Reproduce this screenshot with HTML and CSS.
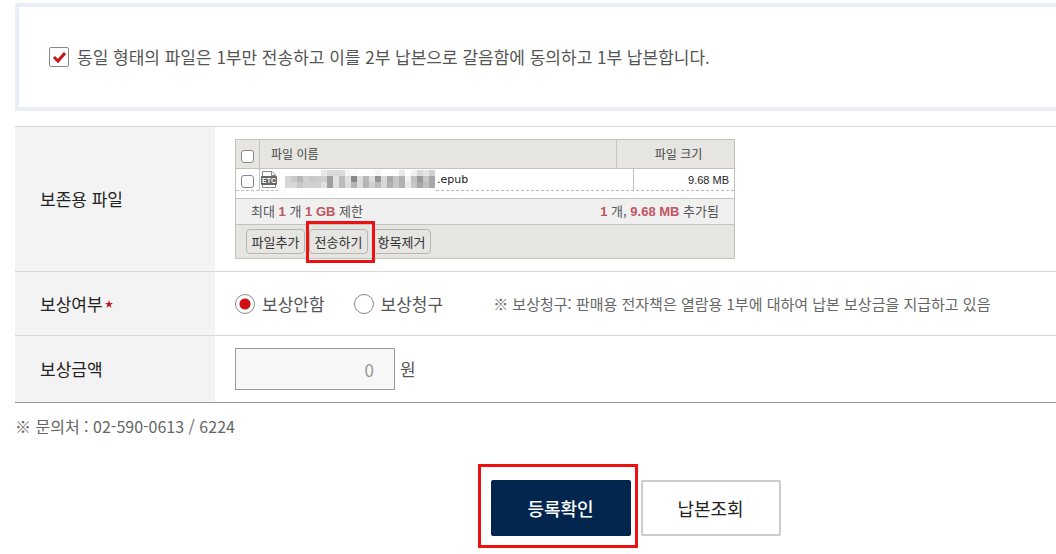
FILE: index.html
```
<!DOCTYPE html>
<html lang="ko">
<head>
    <meta charset="UTF-8">
    <meta name="viewport" content="width=device-width, initial-scale=1.0">
    <title>전자책 납본</title>
    <link rel="stylesheet" href="styles.css">
</head>
<body>
    <form class="deposit-form" id="depositForm">
        <div class="agree-box">
            <input type="checkbox" class="agree-check" id="agree" name="agree" checked>
            <label for="agree">동일 형태의 파일은 1부만 전송하고 이를 2부 납본으로 갈음함에 동의하고 1부 납본합니다.</label>
        </div>

        <div class="form-table">
            <div class="form-row">
                <div class="form-label">보존용 파일</div>
                <div class="form-field">
                    <div class="uploader">
                        <div class="file-head">
                            <div class="col-check"><input type="checkbox" class="file-check" aria-label="전체 선택"></div>
                            <div class="col-name">파일 이름</div>
                            <div class="col-size">파일 크기</div>
                        </div>
                        <div class="file-row">
                            <div class="col-check"><input type="checkbox" class="file-check" aria-label="파일 선택"></div>
                            <div class="col-name">
                                <svg class="file-icon" width="16" height="17" viewBox="0 0 16 17">
                                    <path d="M1.500 6V.5H11L14.500 4V6M10.500 .5V4.500H14.500M1.500 13V16.500H14.500V13" fill="#fff" stroke="#888"/>
                                    <rect y="5" width="16" height="9" rx="1" fill="#666"/>
                                    <text x="8" y="12" text-anchor="middle" class="file-type">ETC</text>
                                </svg>
                                <svg class="mosaic" id="mosaic" width="158" height="23" viewBox="0 0 158 23"></svg>
                                <span class="file-ext">.epub</span>
                            </div>
                            <div class="col-size">9.68 MB</div>
                        </div>
                        <div class="file-status">
                            <span>최대 <b>1</b> 개 <b>1 GB</b> 제한</span>
                            <span><b>1</b> 개, <b>9.68 MB</b> 추가됨</span>
                        </div>
                        <div class="file-buttons">
                            <button type="button">파일추가</button>
                            <button type="button" class="marked">전송하기</button>
                            <button type="button">항목제거</button>
                        </div>
                    </div>
                </div>
            </div>

            <div class="form-row">
                <div class="form-label">보상여부<svg class="star" width="8" height="8" viewBox="0 0 8 8"><path d="M4 0L5 2.900H8L5.600 4.700L6.500 7.700L4 5.900L1.500 7.700L2.400 4.700L0 2.900H3Z" fill="#c8141a"/></svg></div>
                <div class="form-field">
                    <input type="radio" id="rewardNo" name="reward" checked>
                    <label for="rewardNo">보상안함</label>
                    <input type="radio" id="rewardYes" name="reward">
                    <label for="rewardYes">보상청구</label>
                    <p class="note">※ 보상청구: 판매용 전자책은 열람용 1부에 대하여 납본 보상금을 지급하고 있음</p>
                </div>
            </div>

            <div class="form-row">
                <label class="form-label" for="amount">보상금액</label>
                <div class="form-field">
                    <input type="text" class="amount" id="amount" name="amount" value="0" readonly>
                    <span class="unit">원</span>
                </div>
            </div>
        </div>

        <p class="contact">※ 문의처 : 02-590-0613 / 6224</p>

        <div class="actions">
            <button type="submit" class="btn btn-primary marked">등록확인</button>
            <button type="button" class="btn">납본조회</button>
        </div>
    </form>

    <script>
        // hidden file name: one grey level per 6px tile, row by row
        const tiles = [
            'ff ff ff ff ff ff e8 da d8 dc f4 f8 ff ff ff f6 ff ff ff e8 ff f0 d8 e4 d0',
            'd4 c8 b8 d0 c8 cc d0 a0 e4 bc e0 88 dc b8 dc 94 d8 a8 c8 b0 f0 c0 99 c8 a8',
            'd8 d8 c8 d0 d0 d0 e0 a0 e0 bc dc b4 dc b4 d0 bc d8 b0 c8 b0 e8 c8 a8 c0 a8'
        ];
        let rects = '';
        tiles.forEach((row, y) => {
            row.split(' ').forEach((c, x) => {
                rects += `<rect x="${7 + x * 6}" y="${1 + y * 6}" width="6" height="6" fill="#${c}${c}${c}"/>`;
            });
        });
        document.getElementById('mosaic').innerHTML = rects;

        document.getElementById('depositForm').addEventListener('submit', function(event) {
            event.preventDefault();
        });
    </script>
</body>
</html>
```
FILE: styles.css
```
* {
    box-sizing: border-box;
}

body {
    margin: 0;
    padding: 3px 0 18px 15px;
    background-color: #fff;
    color: #555;
    font-family: "Noto Sans CJK KR", sans-serif;
    font-size: 17px;
    line-height: 24px;
}

input,
button {
    margin: 0;
    font-family: inherit;
}

input[type="checkbox"],
input[type="radio"] {
    appearance: none;
    flex: none;
    border: 1px solid #888;
    background-color: #fff;
}

.agree-box {
    display: flex;
    align-items: center;
    gap: 8px;
    padding: 38px 30px;
    border: 4px solid #e9edf5;
    border-right: none;
}

.agree-check {
    width: 20px;
    height: 20px;
    border-radius: 2px;
}

.agree-check:checked {
    background: url("data:image/svg+xml,%3Csvg xmlns='http://www.w3.org/2000/svg' width='18' height='18'%3E%3Cpath d='M4 9L8 13L15 5' fill='none' stroke='%23c8141a' stroke-width='3'/%3E%3C/svg%3E") no-repeat center;
}

.form-table {
    margin-top: 15px;
    border-top: 1px solid #d8d8d8;
    border-bottom: 1px solid #999;
}

.form-row {
    display: flex;
}

.form-row + .form-row {
    border-top: 1px solid #d8d8d8;
}

.form-label {
    display: flex;
    align-items: center;
    flex: none;
    width: 200px;
    padding-left: 25px;
    background-color: #f3f3f3;
    color: #222;
}

.star {
    margin-left: 2px;
}

.form-field {
    display: flex;
    align-items: center;
    flex: 1;
    min-height: 63px;
    padding: 12px 20px;
}

/* file uploader */
.uploader {
    width: 500px;
    border: 1px solid #c3c3bd;
    background-color: #fff;
    color: #444;
    font-size: 12px;
    line-height: 16px;
}

.file-head,
.file-row {
    display: flex;
}

.file-head {
    height: 29px;
    border-bottom: 1px solid #c3c3bd;
    background-color: #e6e5e1;
}

.file-row {
    height: 22px;
    margin-bottom: 7px;
    border-bottom: 1px dashed #bbb;
    color: #222;
}

.col-check {
    display: flex;
    align-items: center;
    width: 24px;
    padding-left: 5px;
    border-right: 1px solid #c3c3bd;
}

.file-head .col-check {
    padding-top: 5px;
}

.file-row .col-check {
    padding-top: 3px;
}

.file-check {
    width: 13px;
    height: 13px;
    border-radius: 3px;
}

.col-name {
    display: flex;
    align-items: center;
    flex: 1;
}

.col-size {
    display: flex;
    align-items: center;
    justify-content: center;
    width: 118px;
    padding-left: 6px;
    border-left: 1px solid #c3c3bd;
}

.file-head .col-name {
    padding-left: 11px;
}

.file-row .col-name {
    gap: 1px;
    padding-left: 1px;
}

.file-row .col-size {
    justify-content: flex-end;
    width: 101px;
    padding-right: 5px;
    font-family: "Liberation Sans", sans-serif;
    font-size: 11px;
}

.file-type {
    fill: #fff;
    font-family: "Liberation Sans", sans-serif;
    font-size: 7px;
    font-weight: bold;
}

.file-ext {
    font-family: "DejaVu Sans", sans-serif;
    font-size: 11px;
}

.mosaic {
    align-self: flex-start;
    background-color: #fff;
}

.file-status {
    display: flex;
    align-items: center;
    justify-content: space-between;
    height: 27px;
    padding: 0 15px;
    border-top: 1px solid #c3c3bd;
    border-bottom: 1px solid #c3c3bd;
    background-color: #f0f0f0;
    color: #555;
    font-size: 13px;
}

.file-status b {
    color: #c25560;
    font-family: "Liberation Sans", sans-serif;
}

.file-buttons {
    display: flex;
    gap: 4px;
    padding: 4px 10px;
    background-color: #e6e5e1;
}

.file-buttons button {
    width: 59px;
    height: 25px;
    padding: 0;
    border: 1px solid #b7b7b0;
    border-radius: 4px;
    background-color: #e6e5e1;
    color: #333;
    font-size: 13px;
    line-height: 16px;
    cursor: pointer;
}

/* red frame round the buttons to press */
.marked {
    position: relative;
}

.marked::after {
    content: "";
    position: absolute;
    inset: -9px -8px -10px -4px;
    border: 3px solid #ee1111;
}

/* radio buttons */
input[type="radio"] {
    width: 20px;
    height: 20px;
    margin-right: 7px;
    border-radius: 50%;
}

input[type="radio"]:checked {
    background: radial-gradient(circle, #d01010 5px, #fff 6px);
}

.form-field label {
    margin-right: 29px;
}

.note {
    margin: 0 0 0 21px;
    color: #666;
    font-size: 15px;
}

.amount {
    width: 160px;
    height: 42px;
    padding: 0 20px;
    border: 1px solid #999;
    background-color: #f7f7f7;
    color: #999;
    font-size: 17px;
    text-align: right;
}

.unit {
    margin-left: 5px;
}

.contact {
    margin: 11px 0 0;
    color: #666;
    font-size: 16px;
}

.actions {
    display: flex;
    justify-content: center;
    gap: 10px;
    margin-top: 42px;
    padding-left: 200px;
}

.btn {
    width: 140px;
    height: 56px;
    border: 2px solid #ccc;
    border-radius: 2px;
    background-color: #fff;
    color: #222;
    font-size: 18px;
    cursor: pointer;
}

.btn-primary {
    border-color: #03264f;
    background-color: #03264f;
    color: #fff;
    font-weight: 500;
}

.btn.marked::after {
    inset: -18px -9px -14px -15px;
}
```
